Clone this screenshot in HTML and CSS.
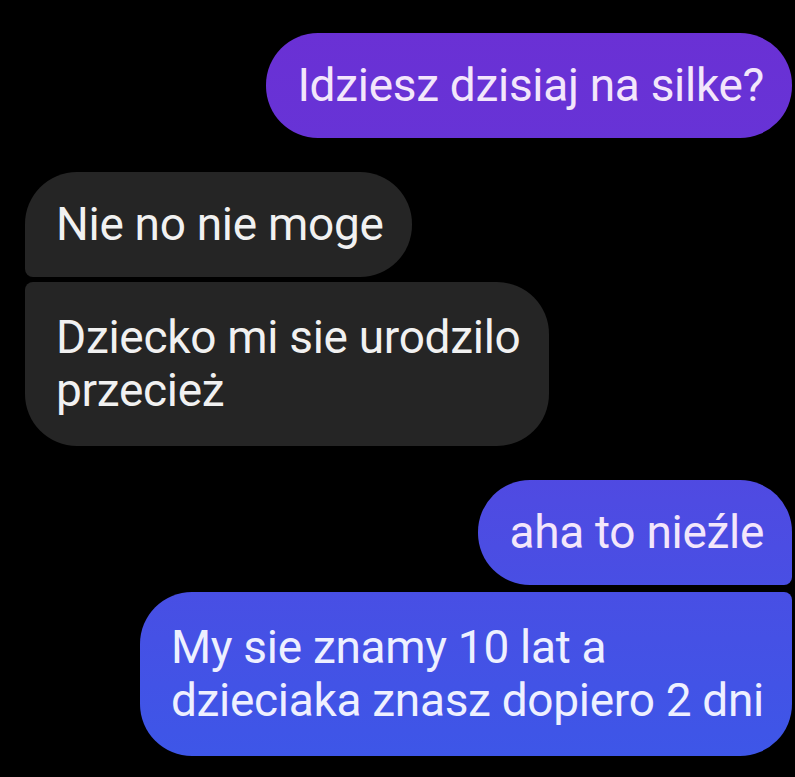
FILE: index.html
```html
<!DOCTYPE html>
<html>
<head>
<meta charset="UTF-8">
<title>Czat</title>
<link rel="stylesheet" href="styles.css">
</head>
<body>
  <div class="chat">
    <div class="group group-out">
      <div class="bubble out single">Idziesz dzisiaj na silke?</div>
    </div>

    <div class="group group-in">
      <div class="bubble in first">Nie no nie moge</div>
      <div class="bubble in last multi">Dziecko mi sie urodzilo<br>przecież</div>
    </div>

    <div class="group group-out">
      <div class="bubble out first">aha to nieźle</div>
      <div class="bubble out last multi">My sie znamy 10 lat a<br>dzieciaka znasz dopiero 2 dni</div>
    </div>
  </div>
</body>
</html>
```

FILE: styles.css
```css
* {
  box-sizing: border-box;
}
html, body {
  margin: 0;
  background: #000;
  height: 100%;
}
body {
  font-family: Roboto, "Liberation Sans", sans-serif;
}
.chat {
  display: flex;
  flex-direction: column;
  gap: 34px;
  padding: 33px 3px 0 25px;
}
.group {
  display: flex;
  flex-direction: column;
  gap: 5px;
}
.group-out {
  align-items: flex-end;
}
.group-out .last {
  margin-top: 2px;
}
.group-in {
  align-items: flex-start;
}
.bubble {
  font-size: 46px;
  line-height: 53px;
  padding: 26px 28px 26px 31px;
  border-radius: 52px;
  letter-spacing: -0.3px;
}
.bubble.multi {
  padding-top: 29px;
  padding-bottom: 29px;
}
.in {
  background: #252525;
  color: #f1f1f1;
}
.out {
  /* messenger style: colour follows position on screen */
  background: linear-gradient(to bottom, #6b30d4 0px, #6733d6 140px, #4e4be2 500px, #3c57e8 777px) fixed;
  color: #f3e6fb;
}
.in.first {
  border-bottom-left-radius: 8px;
}
.in.last {
  border-top-left-radius: 8px;
}
.out.first {
  border-bottom-right-radius: 8px;
}
.out.last {
  border-top-right-radius: 8px;
  color: #eef0ff;
}
```
